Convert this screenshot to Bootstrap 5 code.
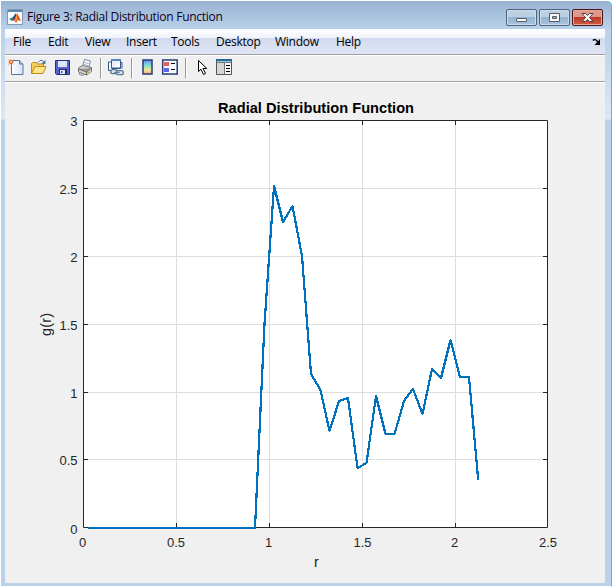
<!DOCTYPE html>
<html lang="en">
<head>
<meta charset="utf-8">
<meta name="viewport" content="width=device-width, initial-scale=1">
<title>Figure 3: Radial Distribution Function</title>
<link href="https://cdn.jsdelivr.net/npm/bootstrap@5.3.0/dist/css/bootstrap.min.css" rel="stylesheet">
<style>
body{background:#fff;width:613px;height:587px;overflow:hidden;font-family:"Open Sans","Noto Sans",sans-serif;font-size:12px;line-height:1;color:#000}
.fig-window{width:611px;height:585px;margin:1px 0 0 1px;padding:0 6px 3px 4px;border-right:1px solid #35c5e0;border-top-right-radius:5px;
 background:linear-gradient(#98b4d2 0,#b9d1ea 28px,#bdd4ec 45px,#dce8f6 118px,#b9d1ea 119px)}
.fig-title{height:28px;padding:4px 2px 0 2px}
.fig-title .caption{margin-left:4px;margin-top:2px;letter-spacing:-.28px;color:#10001c}
.win-btns{gap:2px}
.win-btn{width:31px;height:17px;border:1px solid #4f647e;border-radius:2px;box-shadow:inset 0 0 0 1px #ccdcec;background:linear-gradient(#bccfe3 0 48%,#97b2cf 50%,#a9c4df)}
.win-btn.shut{border-color:#4a1418;box-shadow:inset 0 0 0 1px #e3a99c;background:linear-gradient(#dc9a8c 0 48%,#b93b25 50%,#cf5d43)}
.fig-menu{height:25px;padding:1px 3px 0 8px;background:linear-gradient(#fff 0,#f0f3fa 9px,#d3daee 9px,#dfe5f5 25px)}
.fig-menu span{white-space:nowrap;letter-spacing:-.25px;font-weight:500}
.fig-tools{height:28px;background:#f0f0f0;border-top:1px solid #a0a0a0;border-bottom:1px solid #a0a0a0;box-shadow:inset 0 1px #fff}
.fig-tools svg,.fig-canvas svg{display:block}
.fig-canvas{height:501px;background:#f0f0f0;border-top:1px solid #fff}
.fig-canvas text{font-family:"Liberation Sans",Arial,sans-serif;font-size:13px;fill:#262626}
</style>
</head>
<body>
<div class="fig-window d-flex flex-column">
 <header class="fig-title d-flex align-items-start flex-shrink-0">
  <svg class="mt-1" width="16" height="16" viewBox="0 0 16 16"><path fill="#f8fafc" stroke="#8797a9" d="M.5.5h15v15H.5z"/><path fill="#5588b4" d="M1 1h14v2H1z"/><path fill="#387ca5" d="M2 10l4-2 2 2-3 2z"/><path fill="#244f72" d="M6 8l3-4v5l-3 3z"/><path fill="#d84b1e" d="M5 12l3-3 2-5 4 8-3-1-2 3-2-3z"/><path fill="#f3a02d" d="M9.5 5l1.200 5-1.900 3-.8-2z"/></svg>
  <span class="caption flex-grow-1 pt-1">Figure 3: Radial Distribution Function</span>
  <div class="win-btns d-flex pt-1">
   <div class="win-btn d-flex"><svg width="29" height="15" viewBox="0 0 29 15"><rect x="9.500" y="8.500" width="10" height="3" rx=".5" fill="#f8f8f8" stroke="#555c68"/></svg></div>
   <div class="win-btn d-flex"><svg width="29" height="15" viewBox="0 0 29 15"><path fill="#f8f8f8" fill-rule="evenodd" stroke="#555c68" d="M9.500 3.500h10v8h-10zM12.500 6.500v2h4v-2z"/></svg></div>
   <div class="win-btn shut d-flex"><svg width="29" height="15" viewBox="0 0 29 15"><path fill="#f8f8f8" stroke="#5c3440" d="M9 3.500h3.500l2 2 2-2H20l-3.500 4 3.500 4h-3.500l-2-2-2 2H9l3.500-4z"/></svg></div>
  </div>
 </header>
 <nav class="fig-menu d-flex align-items-center flex-shrink-0">
  <span style="width:35px">File</span><span style="width:37px">Edit</span><span style="width:41px">View</span><span style="width:45px">Insert</span><span style="width:45px">Tools</span><span style="width:59px">Desktop</span><span style="width:61px">Window</span><span>Help</span>
  <svg class="ms-auto" width="10" height="8" viewBox="0 0 10 8"><path fill="none" stroke="#000" stroke-width="1.500" d="M1 2.500Q3 .5 5 3l2 2"/><path d="M8 1v6H2.500z"/></svg>
 </nav>
 <div class="fig-tools flex-shrink-0">
  <svg width="240" height="26" viewBox="5 55 240 26">
   <defs>
    <linearGradient id="bar" x2="0" y2="1"><stop stop-color="#6a86ec"/><stop offset=".3" stop-color="#73d2e4"/><stop offset=".55" stop-color="#b6e8a8"/><stop offset=".75" stop-color="#f5e29a"/><stop offset="1" stop-color="#f39a82"/></linearGradient>
    <linearGradient id="page"><stop stop-color="#fff"/><stop offset="1" stop-color="#d5e4fa"/></linearGradient>
   </defs>
   <path fill="url(#page)" stroke="#5576a5" d="M11.500 60.500h8l3.500 3.500v10.500h-11.500z"/><path fill="#b7cdee" stroke="#5576a5" d="M19.500 60.500v3.500H23"/><path stroke="#ee9a70" d="M8.500 59.500l5 5M13.500 59.500l-5 5M11 59v6M8 62h6"/><circle cx="11" cy="62" r="1.500" fill="#fff0c0" stroke="#d9572a"/>
   <path fill="#f4cf61" stroke="#bc8c13" d="M31.500 73.500v-10l1-1h4l1 1.500h6v3"/><path fill="#ffe583" stroke="#bc8c13" d="M31.500 73.500l3.500-7h11l-3 7z"/><path fill="none" stroke="#557c99" d="M38 62.500q3-4 6-.5"/><path fill="#557c99" d="M45.500 60v4H41z"/>
   <path fill="#5563cf" stroke="#292f80" d="M55.500 60.500h14v14h-13l-1-1z"/><path fill="#dce6fa" d="M58 61h9v6h-9z"/><path fill="#24286b" d="M59 69h8v5h-8z"/><path fill="#e6e8f4" d="M60 70h5v4h-5z"/><path fill="#4553b7" d="M61 71h1.500v2H61z"/>
   <path fill="#f9fbff" stroke="#7e8b9c" d="M82.500 66.500l2-7 6 1.500-2 7z"/><path stroke="#9fb4cd" d="M84.500 62.500l4 1M84 64.500l4 1"/><path fill="#d5d5d5" stroke="#777" d="M78.500 68l4-2.500 9 2v4l-5 3.500-8-3z"/><path fill="#999" stroke="#666" d="M78.500 69l8 3 5-4M86.500 72v3"/><path stroke="#eebd36" stroke-width="1.500" d="M87.500 73l2-1.300"/><path fill="#eee" stroke="#888" d="M80 72.500l4 2-2 1-3-1.500z"/>
   <path stroke="#999" d="M100.500 58v20.500M131.500 58v20.500M185.500 58v20.500"/><path stroke="#fff" d="M101.500 58v20.500M132.500 58v20.500M186.500 58v20.500"/>
   <path fill="#e8f0fb" stroke="#32558e" d="M111.500 59.500h9v9h-9z"/><path fill="#fff" stroke="#32558e" d="M108.500 70.500v-8.500h3v6h9v-6"/><path fill="#5a87c4" d="M111 59h10v2h-10z"/><path fill="none" stroke="#32558e" d="M108.500 70.500h3M121 62.500h1v6"/><g fill="#dfe9f4" stroke="#5b7797" stroke-width="1.300"><rect x="110.700" y="69.700" width="6.500" height="4" rx="2"/><rect x="116.500" y="70.700" width="6.800" height="4" rx="2"/></g><path stroke="#5b7797" d="M114 72.300h6"/>
   <rect x="143" y="60" width="9" height="14" fill="url(#bar)" stroke="#263d72" stroke-width="1.500"/>
   <rect x="162.700" y="60" width="14.500" height="14" fill="#f8faff" stroke="#263d72" stroke-width="1.500"/><path fill="#e5605f" d="M164 62h5v4h-5z"/><path fill="#6264e4" d="M164 68h5v4h-5z"/><path stroke="#000" d="M171 63.500h4M171 69.500h4"/>
   <path fill="#fff" stroke="#000" d="M198.500 60.500v11l2.500-2.300 2.500 5.300 2-1-2.400-5h3.700z"/>
   <path fill="#f5f5f5" stroke="#555" d="M216.500 59.500h15v15h-15z"/><path fill="#286892" d="M216 59h16v2h-16z"/><path fill="#8fcdec" d="M217 61h14v1h-14z"/><path fill="#d7d7d7" d="M217 63h7v11h-7z"/><path stroke="#777" d="M216.500 62.500h15M224.500 62v12"/><path stroke="#000" d="M226 65.500h4M226 68.500h4M226 71.500h4"/>
  </svg>
 </div>
 <main class="fig-canvas">
  <svg width="600" height="500" viewBox="5 83 600 500">
   <path fill="#fff" d="M83 120h465v408H83z"/>
   <path stroke="#dedede" d="M176.500 121v406M269.500 121v406M362.500 121v406M455.500 121v406M84 188.500h463M84 256.500h463M84 324.500h463M84 392.500h463M84 459.500h463"/>
   <path fill="none" stroke="#262626" d="M83.500 120.500h464v407h-464zM176.500 121v4M269.500 121v4M362.500 121v4M455.500 121v4M176.500 527v-4M269.500 527v-4M362.500 527v-4M455.500 527v-4M84 188.500h4M84 256.500h4M84 324.500h4M84 392.500h4M84 459.500h4M547 188.500h-4M547 256.500h-4M547 324.500h-4M547 392.500h-4M547 459.500h-4"/>
   <polyline fill="none" stroke="#0072bd" stroke-width="2.200" stroke-linejoin="round" shape-rendering="crispEdges" points="88,528 255,528 264.500,324 274,186 283,222 292.500,206 302,256 311,374 320.500,390 329.500,431 339,401 348,398 357.500,468 366.500,463 376,396 385.500,434 394.500,434 404,401 413,389 422.500,414 432,369 441,378 450.500,340 460,377 469,377 478.200,480"/>
   <g text-anchor="end"><text x="77.500" y="126">3</text><text x="77.500" y="194">2.5</text><text x="77.500" y="262">2</text><text x="77.500" y="330">1.5</text><text x="77.500" y="398">1</text><text x="77.500" y="465">0.5</text><text x="77.500" y="534">0</text></g>
   <g text-anchor="middle"><text x="82.500" y="547">0</text><text x="176" y="547">0.5</text><text x="268.500" y="547">1</text><text x="362.500" y="547">1.5</text><text x="454.500" y="547">2</text><text x="548" y="547">2.5</text></g>
   <text x="218" y="113" textLength="196" style="font-size:14.600px;font-weight:700;fill:#000">Radial Distribution Function</text>
   <text x="314" y="567" style="font-size:14.500px">r</text>
   <text transform="translate(51 336) rotate(-90)" textLength="23" style="font-size:14.500px">g(r)</text>
  </svg>
 </main>
</div>
<script src="https://cdn.jsdelivr.net/npm/bootstrap@5.3.0/dist/js/bootstrap.bundle.min.js"></script>
</body>
</html>
